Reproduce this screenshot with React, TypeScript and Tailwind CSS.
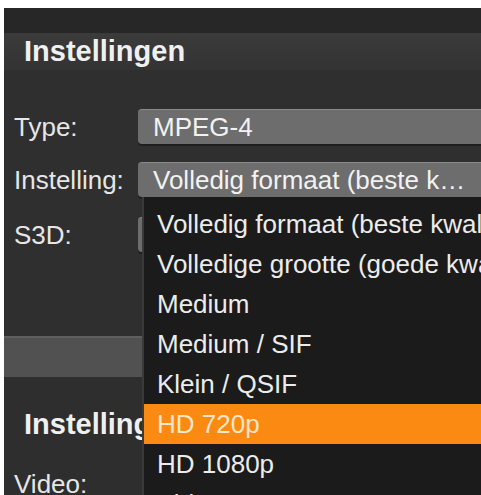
import React from 'react';

const options = [
  'Volledig formaat (beste kwaliteit)',
  'Volledige grootte (goede kwaliteit)',
  'Medium',
  'Medium / SIF',
  'Klein / QSIF',
  'HD 720p',
  'HD 1080p',
  'Video',
];

function Row({ label, value, mt }: { label: string; value?: string; mt: string }) {
  return (
    <div className={`flex shrink-0 items-center ${mt}`}>
      <div className="w-[134px] shrink-0 pl-[10px] text-[26px] leading-none text-[#e6e6e6]">{label}</div>
      <div className="flex h-[35px] flex-1 items-center rounded-l-[4px] border-t border-[#8a8a8a] bg-[#6d6d6d] pl-[15px] text-[26px] leading-none text-[#f2f2f2] shadow-[0_2px_0_#1e1e1e]">
        {value}
      </div>
    </div>
  );
}

export default function App() {
  const selected = 'HD 720p';

  return (
    <div className="h-[495px] w-[481px] overflow-hidden bg-white pl-[4px] pt-[8px]" style={{ fontFamily: '"Liberation Sans", Arial, sans-serif' }}>
      <div className="relative flex h-full flex-col bg-[#2f2f2f]">
        <div className="h-[25px] shrink-0 bg-[#272727]" />
        <div className="flex h-[37px] shrink-0 items-center bg-gradient-to-b from-[#3b3b3b] to-[#333333] pl-[20px] text-[29px] font-bold text-[#f0f0f0]">
          Instellingen
        </div>

        <div className="flex h-[266px] shrink-0 flex-col">
          <Row label="Type:" value="MPEG-4" mt="mt-[39px]" />
          <Row label="Instelling:" value="Volledig formaat (beste k…" mt="mt-[18px]" />
          <Row label="S3D:" value="" mt="mt-[20px]" />
        </div>

        <div className="h-[2px] shrink-0 bg-[#5f5f5f]" />
        <div className="h-[39px] shrink-0 bg-[#515151]" />
        <div className="flex flex-1 flex-col bg-[#2e2e2e]">
          <div className="mt-[30px] shrink-0 pl-[20px] text-[29px] font-bold leading-[34px] text-[#f0f0f0]">Instellingen</div>
          <div className="mt-[28px] shrink-0 pl-[10px] text-[26px] leading-[30px] text-[#e6e6e6]">Video:</div>
        </div>

        <div className="absolute bottom-0 left-[138px] right-0 top-[189px] overflow-hidden border-l-[2px] border-[#3a3a3a] bg-[#1b1b1b] pt-[7px]">
          {options.map((o) => (
            <div
              key={o}
              className={`flex h-[40px] items-center whitespace-nowrap pl-[13px] text-[26px] leading-none ${
                o === selected ? 'bg-[#fb8a12] text-[#fbe6c8]' : 'text-[#ececec]'
              }`}
            >
              {o}
            </div>
          ))}
        </div>
      </div>
    </div>
  );
}
